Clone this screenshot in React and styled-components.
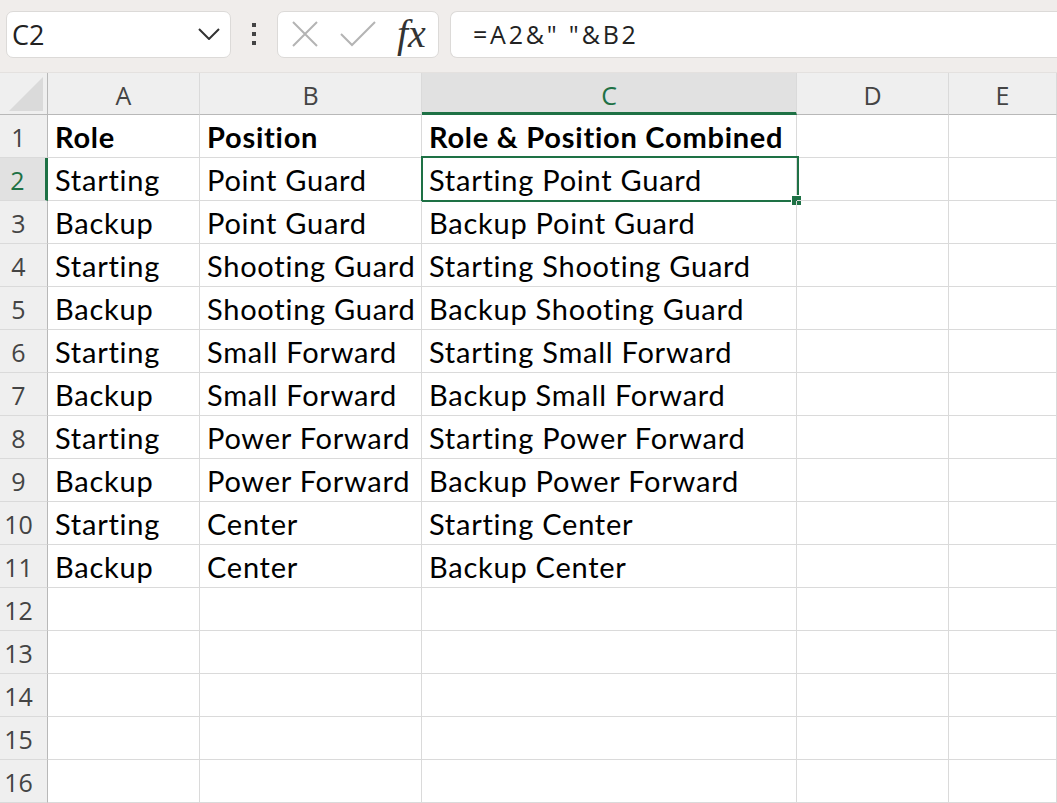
import React from "react"
import styled, { createGlobalStyle, css } from "styled-components"

const GlobalStyle = createGlobalStyle`
  html, body {
    margin: 0;
    padding: 0;
    background: #ffffff;
    overflow: hidden;
  }
  * { box-sizing: border-box; }
`

const Page = styled.div`
  width: 1057px;
  height: 803px;
  overflow: hidden;
  font-family: "Open Sans", "Noto Sans", sans-serif;
`

const Toolbar = styled.div`
  display: flex;
  align-items: center;
  height: 73px;
  padding: 0 0 4px 6px;
  background: #f0edeb;
  border-bottom: 1px solid #e4e1df;
`

const NameBox = styled.div`
  display: flex;
  align-items: center;
  justify-content: space-between;
  width: 225px;
  height: 47px;
  padding: 0 10px 0 5px;
  background: #fff;
  border: 1px solid #dcdad8;
  border-radius: 7px;
  font-size: 27px;
  color: #222;
`

const Dots = styled.div`
  display: flex;
  flex-direction: column;
  gap: 5px;
  margin: 0 21px 0 21px;
  span {
    width: 4px;
    height: 4px;
    background: #444;
  }
`

const FxBox = styled.div`
  display: flex;
  align-items: center;
  gap: 21px;
  width: 162px;
  height: 47px;
  padding: 0 10px 0 13px;
  background: #fff;
  border: 1px solid #dcdad8;
  border-radius: 7px;
`

const FxLabel = styled.span`
  font-family: "Liberation Serif", "DejaVu Serif", serif;
  font-style: italic;
  font-size: 40px;
  color: #333;
  margin-left: 0;
  line-height: 1;
`

const FormulaBar = styled.div`
  flex: 1;
  display: flex;
  align-items: center;
  height: 47px;
  margin-left: 11px;
  padding-left: 22px;
  background: #fff;
  border: 1px solid #dcdad8;
  border-right: none;
  border-radius: 7px 0 0 7px;
  font-size: 25px;
  letter-spacing: 2.8px;
  color: #222;
`

const Sheet = styled.div`
  display: grid;
  grid-template-columns: 48px 152px 222px 375px 152px 108px;
  grid-template-rows: 42px;
  grid-auto-rows: 43px;
`

const Corner = styled.div`
  position: relative;
  background: #efefef;
  border-right: 1px solid #b8b8b8;
  border-bottom: 1px solid #b8b8b8;
  &::after {
    content: "";
    position: absolute;
    right: 4px;
    bottom: 3px;
    width: 0;
    height: 0;
    border-left: 34px solid transparent;
    border-bottom: 34px solid #dadada;
  }
`

const ColHead = styled.div`
  display: flex;
  align-items: center;
  justify-content: center;
  padding-top: ${p => (p.$active ? "4px" : "2px")};
  background: ${p => (p.$active ? "#e1e1e1" : "#efefef")};
  color: ${p => (p.$active ? "#1e7145" : "#444")};
  font-size: 25px;
  border-right: 1px solid #dadada;
  border-bottom: ${p => (p.$active ? "3px solid #1e7145" : "1px solid #b8b8b8")};
`

const RowHead = styled.div`
  display: flex;
  align-items: center;
  justify-content: center;
  padding: 2px 10px 0 0;
  background: ${p => (p.$active ? "#e1e1e1" : "#efefef")};
  color: ${p => (p.$active ? "#1e7145" : "#444")};
  font-size: 25px;
  border-bottom: 1px solid #dadada;
  border-right: ${p => (p.$active ? "3px solid #1e7145" : "1px solid #b8b8b8")};
`

const Cell = styled.div`
  position: relative;
  display: flex;
  align-items: flex-end;
  padding: 0 0 6px 7px;
  font-family: "Lato", "Open Sans", sans-serif;
  font-size: 29px;
  line-height: 1;
  letter-spacing: 0.75px;
  font-weight: ${p => (p.$bold ? 700 : 400)};
  color: #000;
  white-space: nowrap;
  border-right: 1px solid #dadada;
  border-bottom: 1px solid #dadada;
  ${p =>
    p.$selected &&
    css`
      &::before {
        content: "";
        position: absolute;
        left: -1px;
        top: -2px;
        right: -3px;
        bottom: -2px;
        border: 2px solid #1e7145;
        pointer-events: none;
      }
      &::after {
        content: "";
        position: absolute;
        right: -6px;
        bottom: -6px;
        width: 9px;
        height: 9px;
        background: #1e7145;
        border: 1px solid #fff;
      }
    `}
`

const XIcon = () => (
  <svg width="28" height="28" viewBox="0 0 28 28">
    <path d="M2 2 L26 26 M26 2 L2 26" stroke="#b4b4b4" strokeWidth="2" fill="none" />
  </svg>
)

const CheckIcon = () => (
  <svg width="36" height="26" viewBox="0 0 36 26">
    <path d="M1 13 L12 24 L35 1" stroke="#b4b4b4" strokeWidth="2" fill="none" />
  </svg>
)

const Chevron = () => (
  <svg width="22" height="12" viewBox="0 0 22 12">
    <path d="M1 1 L11 11 L21 1" stroke="#333" strokeWidth="2" fill="none" />
  </svg>
)

const rows = [
  ["Role", "Position", "Role & Position Combined"],
  ["Starting", "Point Guard", "Starting Point Guard"],
  ["Backup", "Point Guard", "Backup Point Guard"],
  ["Starting", "Shooting Guard", "Starting Shooting Guard"],
  ["Backup", "Shooting Guard", "Backup Shooting Guard"],
  ["Starting", "Small Forward", "Starting Small Forward"],
  ["Backup", "Small Forward", "Backup Small Forward"],
  ["Starting", "Power Forward", "Starting Power Forward"],
  ["Backup", "Power Forward", "Backup Power Forward"],
  ["Starting", "Center", "Starting Center"],
  ["Backup", "Center", "Backup Center"],
]

const cols = ["A", "B", "C", "D", "E"]

export default function App() {
  const allRows = [...rows]
  while (allRows.length < 16) allRows.push(["", "", ""])

  return (
    <Page>
      <GlobalStyle />
      <Toolbar>
        <NameBox>
          <span>C2</span>
          <Chevron />
        </NameBox>
        <Dots>
          <span />
          <span />
          <span />
        </Dots>
        <FxBox>
          <XIcon />
          <CheckIcon />
          <FxLabel>fx</FxLabel>
        </FxBox>
        <FormulaBar>=A2&amp;" "&amp;B2</FormulaBar>
      </Toolbar>
      <Sheet>
        <Corner />
        {cols.map(c => (
          <ColHead key={c} $active={c === "C"}>{c}</ColHead>
        ))}
        {allRows.map((r, i) => (
          <React.Fragment key={i}>
            <RowHead $active={i === 1}>{i + 1}</RowHead>
            <Cell $bold={i === 0}>{r[0]}</Cell>
            <Cell $bold={i === 0}>{r[1]}</Cell>
            <Cell $bold={i === 0} $selected={i === 1}>{r[2]}</Cell>
            <Cell />
            <Cell />
          </React.Fragment>
        ))}
      </Sheet>
    </Page>
  )
}
